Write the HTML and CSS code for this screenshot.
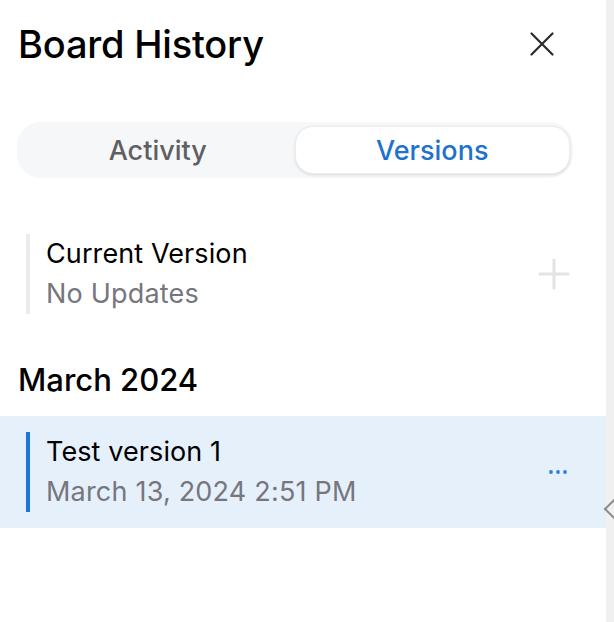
FILE: index.html
```html
<!DOCTYPE html>
<html>
<head>
<meta charset="utf-8">
<link rel="stylesheet" href="styles.css">
</head>
<body>
<div class="app">
  <aside class="panel">
    <header class="header">
      <h1 class="title">Board History</h1>
      <button class="close" aria-label="Close">
        <svg width="24" height="24" viewBox="0 0 24 24"><path d="M1.5 1.5L22.5 22.5M22.5 1.5L1.5 22.5" stroke="#2b2b2e" stroke-width="2.2" stroke-linecap="round" fill="none"/></svg>
      </button>
    </header>
    <div class="tabs">
      <div class="tab">Activity</div>
      <div class="tab active">Versions</div>
    </div>
    <div class="current">
      <div class="entry entry-current">
        <div class="entry-text">
          <div class="entry-name">Current Version</div>
          <div class="entry-sub">No Updates</div>
        </div>
        <svg class="plus" width="32" height="32" viewBox="0 0 32 32"><path d="M16 2V30M2 16H30" stroke="#e3e3e5" stroke-width="3" stroke-linecap="round"/></svg>
      </div>
    </div>
    <h2 class="month">March 2024</h2>
    <div class="row">
      <div class="entry entry-selected">
        <div class="entry-text">
          <div class="entry-name">Test version 1</div>
          <div class="entry-sub">March 13, 2024 2:51 PM</div>
        </div>
        <svg class="dots" width="20" height="6" viewBox="0 0 20 6"><circle cx="3" cy="3" r="1.9" fill="#2f7fd8"/><circle cx="10" cy="3" r="1.9" fill="#2f7fd8"/><circle cx="17" cy="3" r="1.9" fill="#2f7fd8"/></svg>
      </div>
    </div>
  </aside>
  <div class="strip">
    <span class="chev"></span>
  </div>
</div>
</body>
</html>
```
FILE: styles.css
```css
html, body {
  margin: 0;
  padding: 0;
  background: #ffffff;
}
body {
  font-family: Inter, "Noto Sans", "Liberation Sans", sans-serif;
  color: #000;
}
.app {
  display: flex;
  width: 614px;
  height: 622px;
  overflow: hidden;
}
.panel {
  width: 606px;
  flex: none;
  background: #fff;
}
.strip {
  flex: 1;
  background: #f0f0f1;
  position: relative;
}
.chev {
  position: absolute;
  left: 1px;
  top: 501px;
  width: 14px;
  height: 14px;
  border-left: 2px solid #8a8a8a;
  border-bottom: 2px solid #8a8a8a;
  transform: rotate(45deg);
}
.header {
  display: flex;
  align-items: center;
  justify-content: space-between;
  padding: 22px 52px 0 18px;
  height: 44px;
}
.title {
  margin: 0;
  font-size: 38px;
  font-weight: 500;
  letter-spacing: -0.2px;
  line-height: 44px;
}
.close {
  border: 0;
  background: none;
  padding: 0;
  width: 24px;
  height: 24px;
  display: flex;
}
.tabs {
  margin: 56px 33px 0 17px;
  height: 56px;
  box-sizing: border-box;
  padding: 4px 3px 4px 4px;
  background: #f6f7f9;
  border-radius: 24px;
  display: flex;
}
.tab {
  flex: 1;
  display: flex;
  align-items: center;
  justify-content: center;
  font-size: 27px;
  font-weight: 500;
  color: #5f6064;
  border-radius: 18px;
}
.tab.active {
  background: #fff;
  color: #1f72cc;
  box-shadow: 0 1px 3px rgba(0,0,0,0.12);
  border: 1px solid #ececee;
}
.current {
  padding: 56px 0 0 26px;
}
.entry {
  display: flex;
  align-items: center;
  justify-content: space-between;
  border-left: 4px solid #ebebec;
  padding: 6px 0 6px 16px;
  height: 80px;
  box-sizing: border-box;
}
.entry-current {
  padding-right: 36px;
}
.entry-name {
  font-size: 27px;
  line-height: 40px;
  letter-spacing: 0.1px;
  color: #000;
}
.entry-sub {
  font-size: 27px;
  line-height: 40px;
  letter-spacing: 0.2px;
  color: #76767e;
}
.month {
  margin: 0;
  padding: 48px 0 0 18px;
  font-size: 31px;
  font-weight: 500;
  line-height: 36px;
}
.row {
  margin-top: 18px;
  background: #e6f0fb;
  height: 112px;
  padding: 16px 0 0 26px;
  box-sizing: border-box;
}
.entry-selected {
  border-left-color: #1d74dc;
  padding-right: 38px;
}
```
